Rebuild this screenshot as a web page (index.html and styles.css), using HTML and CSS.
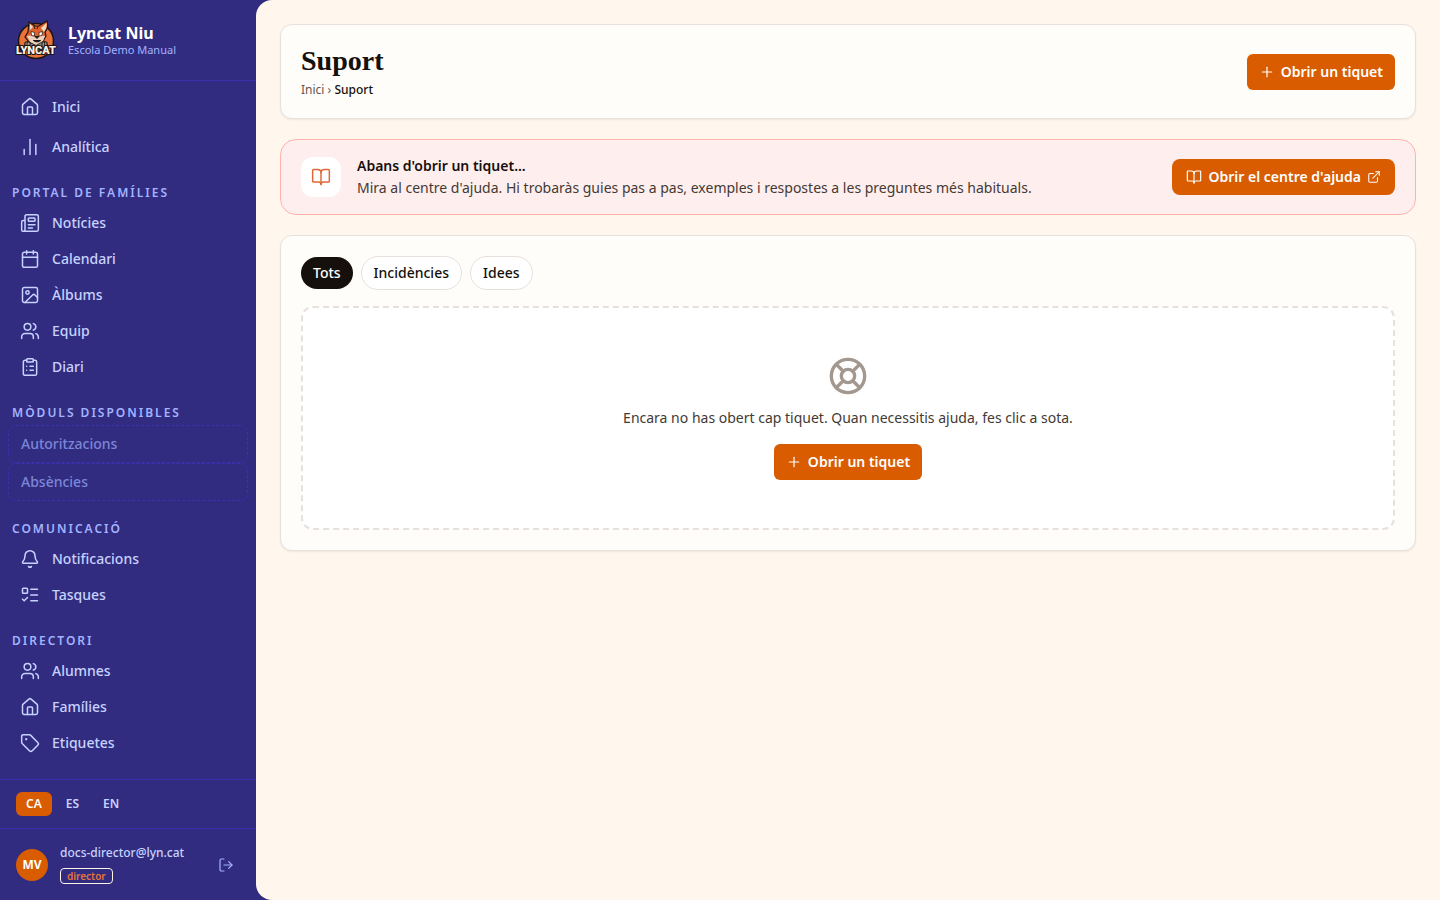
FILE: index.html
```html
<!DOCTYPE html>
<html lang="ca">
<head>
    <meta charset="UTF-8">
    <meta name="viewport" content="width=device-width, initial-scale=1.0">
    <title>Suport - Lyncat Niu</title>
    <link rel="stylesheet" href="styles.css">
</head>
<body>
    <!-- shared icons -->
    <svg class="sprite" aria-hidden="true">
        <symbol id="i-home" viewBox="0 0 24 24">
            <path d="M15 21v-8a1 1 0 0 0-1-1h-4a1 1 0 0 0-1 1v8"/>
            <path d="M3 10a2 2 0 0 1 .709-1.528l7-5.999a2 2 0 0 1 2.582 0l7 5.999A2 2 0 0 1 21 10v9a2 2 0 0 1-2 2H5a2 2 0 0 1-2-2z"/>
        </symbol>
        <symbol id="i-users" viewBox="0 0 24 24">
            <path d="M16 21v-2a4 4 0 0 0-4-4H6a4 4 0 0 0-4 4v2"/>
            <circle cx="9" cy="7" r="4"/>
            <path d="M22 21v-2a4 4 0 0 0-3-3.87"/>
            <path d="M16 3.13a4 4 0 0 1 0 7.75"/>
        </symbol>
        <symbol id="i-plus" viewBox="0 0 24 24">
            <path d="M5 12h14"/>
            <path d="M12 5v14"/>
        </symbol>
        <symbol id="i-book" viewBox="0 0 24 24">
            <path d="M12 7v14"/>
            <path d="M3 18a1 1 0 0 1-1-1V4a1 1 0 0 1 1-1h5a4 4 0 0 1 4 4 4 4 0 0 1 4-4h5a1 1 0 0 1 1 1v13a1 1 0 0 1-1 1h-6a3 3 0 0 0-3 3 3 3 0 0 0-3-3z"/>
        </symbol>
    </svg>

    <div class="app">
        <aside class="sidebar">
            <div class="brand">
                <svg class="logo" viewBox="0 0 40 40" role="img" aria-label="Lyncat">
                    <circle cx="20" cy="21" r="17.500" fill="#e8733a" stroke="#1d1512" stroke-width="1.500"/>
                    <path d="M8 30c-1-7 4-11 12-11s13 4 12 11z" fill="#8d8177" stroke="#1d1512"/>
                    <path d="M12 12 13 2l6 4h4l8-5c1.500 4 .500 8-2 11l1 4-3 5-7 4-7-3-4-5z" fill="#df622c" stroke="#1d1512" stroke-width="1.200"/>
                    <path d="m14 4 3 3-3 3zM30.500 3c.500 4-.500 6-2.500 9l-3-4z" fill="#f3d8bd"/>
                    <path d="M11 16l4-.500 5 2 5-2 4 .500-2 5-7 4-6-3z" fill="#e9d3bf"/>
                    <path d="M15 11.500l3.500 1v3.500l-3-.500zM26.500 11.500l-3.500 1v3.500l3-.500z" fill="#fff" stroke="#1d1512" stroke-width=".7"/>
                    <path d="M19 16.500h4l-2 2zM17 20c2 2.500 6 2.500 8 0M18 6l1 3M22 6l-1 3" fill="#1d1512" stroke="#1d1512" stroke-width=".9"/>
                    <path d="M9 22h5v5H9zM26 22h5v5h-5z" fill="#9c9188" stroke="#1d1512" stroke-width=".9"/>
                    <path d="M11 22v4M28.500 22v4" stroke="#1d1512" stroke-width=".8"/>
                    <text class="logo-text" x="20" y="34" text-anchor="middle">LYNCAT</text>
                </svg>
                <div class="brand-info">
                    <p class="brand-name">Lyncat Niu</p>
                    <p class="brand-school">Escola Demo Manual</p>
                </div>
            </div>

            <nav class="nav">
                <ul class="nav-list nav-main">
                    <li><a class="nav-link" href="#"><svg class="icon"><use href="#i-home"/></svg>Inici</a></li>
                    <li><a class="nav-link" href="#"><svg class="icon" viewBox="0 0 24 24"><path d="M5 21v-6"/><path d="M12 21V3"/><path d="M19 21V9"/></svg>Analítica</a></li>
                </ul>

                <h2 class="nav-title">Portal de famílies</h2>
                <ul class="nav-list">
                    <li><a class="nav-link" href="#"><svg class="icon" viewBox="0 0 24 24"><path d="M15 18h-5"/><path d="M18 14h-8"/><path d="M4 22h16a2 2 0 0 0 2-2V4a2 2 0 0 0-2-2H8a2 2 0 0 0-2 2v16a2 2 0 0 1-4 0v-9a2 2 0 0 1 2-2h2"/><rect width="8" height="4" x="10" y="6" rx="1"/></svg>Notícies</a></li>
                    <li><a class="nav-link" href="#"><svg class="icon" viewBox="0 0 24 24"><path d="M8 2v4"/><path d="M16 2v4"/><rect width="18" height="18" x="3" y="4" rx="2"/><path d="M3 10h18"/></svg>Calendari</a></li>
                    <li><a class="nav-link" href="#"><svg class="icon" viewBox="0 0 24 24"><rect width="18" height="18" x="3" y="3" rx="2"/><circle cx="9" cy="9" r="2"/><path d="m21 15-3.086-3.086a2 2 0 0 0-2.828 0L6 21"/></svg>Àlbums</a></li>
                    <li><a class="nav-link" href="#"><svg class="icon"><use href="#i-users"/></svg>Equip</a></li>
                    <li><a class="nav-link" href="#"><svg class="icon" viewBox="0 0 24 24"><rect width="8" height="4" x="8" y="2" rx="1"/><path d="M16 4h2a2 2 0 0 1 2 2v14a2 2 0 0 1-2 2H6a2 2 0 0 1-2-2V6a2 2 0 0 1 2-2h2"/><path d="M12 11h4"/><path d="M12 16h4"/><path d="M8 11h.01"/><path d="M8 16h.01"/></svg>Diari</a></li>
                </ul>

                <h2 class="nav-title">Mòduls disponibles</h2>
                <ul class="nav-list">
                    <li><a class="nav-link locked" href="#">Autoritzacions</a></li>
                    <li><a class="nav-link locked" href="#">Absències</a></li>
                </ul>

                <h2 class="nav-title">Comunicació</h2>
                <ul class="nav-list">
                    <li><a class="nav-link" href="#"><svg class="icon" viewBox="0 0 24 24"><path d="M10.268 21a2 2 0 0 0 3.464 0"/><path d="M3.262 15.326A1 1 0 0 0 4 17h16a1 1 0 0 0 .74-1.673C19.410 13.956 18 12.499 18 8A6 6 0 0 0 6 8c0 4.499-1.411 5.956-2.738 7.326"/></svg>Notificacions</a></li>
                    <li><a class="nav-link" href="#"><svg class="icon" viewBox="0 0 24 24"><rect x="3" y="4" width="6" height="6" rx="1"/><path d="m3 17 2 2 4-4"/><path d="M13 5h8"/><path d="M13 12h8"/><path d="M13 19h8"/></svg>Tasques</a></li>
                </ul>

                <h2 class="nav-title">Directori</h2>
                <ul class="nav-list">
                    <li><a class="nav-link" href="#"><svg class="icon"><use href="#i-users"/></svg>Alumnes</a></li>
                    <li><a class="nav-link" href="#"><svg class="icon"><use href="#i-home"/></svg>Famílies</a></li>
                    <li><a class="nav-link" href="#"><svg class="icon" viewBox="0 0 24 24"><path d="M12.586 2.586A2 2 0 0 0 11.172 2H4a2 2 0 0 0-2 2v7.172a2 2 0 0 0 .586 1.414l8.704 8.704a2.426 2.426 0 0 0 3.420 0l6.580-6.580a2.426 2.426 0 0 0 0-3.420z"/><circle cx="7.500" cy="7.500" r=".5" fill="currentColor"/></svg>Etiquetes</a></li>
                </ul>
            </nav>

            <div class="languages">
                <button class="lang active" type="button">CA</button>
                <button class="lang" type="button">ES</button>
                <button class="lang" type="button">EN</button>
            </div>

            <div class="user">
                <div class="avatar">MV</div>
                <div class="user-info">
                    <p class="user-email">docs-director@lyn.cat</p>
                    <span class="role">director</span>
                </div>
                <button class="logout" type="button" aria-label="Tancar sessió">
                    <svg class="icon icon-sm" viewBox="0 0 24 24"><path d="m16 17 5-5-5-5"/><path d="M21 12H9"/><path d="M9 21H5a2 2 0 0 1-2-2V5a2 2 0 0 1 2-2h4"/></svg>
                </button>
            </div>
        </aside>

        <main class="content">
            <header class="card page-header">
                <div>
                    <h1>Suport</h1>
                    <p class="breadcrumb"><a href="#">Inici</a> › <strong>Suport</strong></p>
                </div>
                <button class="btn" type="button"><svg class="icon icon-sm"><use href="#i-plus"/></svg>Obrir un tiquet</button>
            </header>

            <section class="notice">
                <div class="notice-icon"><svg class="icon"><use href="#i-book"/></svg></div>
                <div class="notice-text">
                    <h2>Abans d'obrir un tiquet...</h2>
                    <p>Mira al centre d'ajuda. Hi trobaràs guies pas a pas, exemples i respostes a les preguntes més habituals.</p>
                </div>
                <a class="btn btn-help" href="#">
                    <svg class="icon icon-sm"><use href="#i-book"/></svg>
                    Obrir el centre d'ajuda
                    <svg class="icon icon-xs" viewBox="0 0 24 24"><path d="M15 3h6v6"/><path d="M10 14 21 3"/><path d="M18 13v6a2 2 0 0 1-2 2H5a2 2 0 0 1-2-2V8a2 2 0 0 1 2-2h6"/></svg>
                </a>
            </section>

            <section class="card">
                <div class="filters">
                    <button class="pill active" type="button">Tots</button>
                    <button class="pill" type="button">Incidències</button>
                    <button class="pill" type="button">Idees</button>
                </div>
                <div class="empty">
                    <svg class="icon icon-lg" viewBox="0 0 24 24"><circle cx="12" cy="12" r="10"/><path d="m4.930 4.930 4.240 4.240"/><path d="m14.830 9.170 4.240-4.240"/><path d="m14.830 14.830 4.240 4.240"/><path d="m9.170 14.830-4.240 4.240"/><circle cx="12" cy="12" r="4"/></svg>
                    <p>Encara no has obert cap tiquet. Quan necessitis ajuda, fes clic a sota.</p>
                    <button class="btn" type="button"><svg class="icon icon-sm"><use href="#i-plus"/></svg>Obrir un tiquet</button>
                </div>
            </section>
        </main>
    </div>
</body>
</html>
```
FILE: styles.css
```css
*{
    margin: 0;
    padding: 0;
    box-sizing: border-box;
}

:root{
    --indigo: #312c80;
    --indigo-line: #3b30b0;
    --indigo-text: #c7d2ff;
    --indigo-muted: #a3b3ff;
    --orange: #d95d00;
    --cream: #fff7ed;
    --card: #fffdf9;
    --line: #e8e0dc;
    --ink: #16100c;
    --text: #433a34;
}

body{
    font-family: "Noto Sans", "Open Sans", sans-serif;
    font-size: 14px;
    line-height: 20px;
    color: var(--ink);
    background-color: var(--indigo);
}

a{
    color: inherit;
    text-decoration: none;
}

button{
    font: inherit;
    color: inherit;
    background: none;
    border: none;
    cursor: pointer;
}

ul{
    list-style: none;
}

.sprite{
    display: none;
}

.icon{
    width: 20px;
    height: 20px;
    flex-shrink: 0;
    fill: none;
    stroke: currentColor;
    stroke-width: 1.8;
    stroke-linecap: round;
    stroke-linejoin: round;
}

.icon-sm{
    width: 16px;
    height: 16px;
}

.icon-xs{
    width: 14px;
    height: 14px;
}

.icon-lg{
    width: 40px;
    height: 40px;
    stroke-width: 2;
    color: #a3988f;
}

.app{
    display: flex;
    height: 100vh;
}

/* sidebar */
.sidebar{
    width: 256px;
    flex-shrink: 0;
    display: flex;
    flex-direction: column;
    color: var(--indigo-text);
}

.brand{
    display: flex;
    align-items: center;
    gap: 12px;
    padding: 20px 16px;
    border-bottom: 1px solid var(--indigo-line);
}

.logo{
    width: 40px;
    height: 40px;
    overflow: visible;
}

.logo-text{
    font: 900 11px "Roboto", sans-serif;
    fill: #fff1e4;
    stroke: #1d1512;
    stroke-width: 2px;
    paint-order: stroke;
}

.brand-name{
    font-size: 16px;
    font-weight: 700;
    line-height: 20px;
    color: #fff;
}

.brand-school{
    font-size: 11px;
    line-height: 14px;
    color: var(--indigo-muted);
}

.nav{
    flex: 1;
    min-height: 0;
    padding: 8px;
    overflow: hidden;
}

.nav-main{
    display: grid;
    gap: 4px;
}

.nav-title{
    padding: 19px 4px 3px;
    font-size: 12px;
    font-weight: 600;
    line-height: 18px;
    letter-spacing: 2px;
    text-transform: uppercase;
    color: var(--indigo-muted);
}

.nav-link{
    display: flex;
    align-items: center;
    gap: 12px;
    padding: 8px 12px;
    border-radius: 8px;
    font-weight: 500;
}

.nav-link.locked{
    border: 1px dashed var(--indigo-line);
    color: #7c86d8;
}

.languages{
    display: flex;
    gap: 4px;
    padding: 12px 16px;
    border-top: 1px solid var(--indigo-line);
}

.lang{
    padding: 4px 10px;
    border-radius: 6px;
    font-size: 12px;
    font-weight: 600;
    line-height: 16px;
}

.lang.active{
    background-color: var(--orange);
    color: #fff;
}

.user{
    display: flex;
    align-items: center;
    gap: 12px;
    padding: 16px;
    border-top: 1px solid var(--indigo-line);
}

.avatar{
    width: 32px;
    height: 32px;
    display: flex;
    align-items: center;
    justify-content: center;
    border-radius: 50%;
    background-color: var(--orange);
    font-size: 12px;
    font-weight: 700;
    color: #fff;
}

.user-info{
    flex: 1;
    display: flex;
    flex-direction: column;
    align-items: flex-start;
    gap: 7px;
}

.user-email{
    font-size: 12px;
    line-height: 16px;
    font-weight: 500;
}

.role{
    padding: 0 6px;
    border: 1px solid #fff1e4;
    border-radius: 4px;
    font-size: 10px;
    font-weight: 600;
    line-height: 14px;
    color: #e8733a;
}

.logout{
    display: flex;
    padding: 6px;
    color: var(--indigo-muted);
}

/* content */
.content{
    flex: 1;
    min-width: 0;
    display: flex;
    flex-direction: column;
    gap: 20px;
    padding: 24px;
    overflow: auto;
    border-radius: 16px 0 0 16px;
    background-color: var(--cream);
}

.card{
    padding: 20px;
    border: 1px solid var(--line);
    border-radius: 12px;
    background-color: var(--card);
    box-shadow: 0 1px 2px rgba(60, 40, 20, 0.08);
}

.page-header{
    display: flex;
    align-items: center;
    justify-content: space-between;
}

.page-header h1{
    font-family: "Liberation Serif", serif;
    font-size: 28px;
    font-weight: 700;
    line-height: 32px;
}

.breadcrumb{
    margin-top: 4px;
    font-size: 12px;
    line-height: 17px;
    color: #5f554e;
}

.breadcrumb strong{
    font-weight: 500;
    color: var(--ink);
}

.btn{
    display: flex;
    align-items: center;
    gap: 6px;
    padding: 8px 12px;
    border-radius: 6px;
    background-color: var(--orange);
    font-weight: 600;
    color: #fff;
    white-space: nowrap;
}

.btn-help{
    padding: 8px 14px;
    border-radius: 8px;
}

.notice{
    display: flex;
    align-items: center;
    gap: 16px;
    padding: 16px 20px;
    border: 1px solid #ffb3ab;
    border-radius: 16px;
    background-color: #ffeeee;
}

.notice-icon{
    width: 40px;
    height: 40px;
    display: flex;
    align-items: center;
    justify-content: center;
    border-radius: 12px;
    background-color: #fff;
    color: #e0683a;
}

.notice-text{
    flex: 1;
    display: grid;
    gap: 2px;
}

.notice-text h2{
    font-size: 14px;
    font-weight: 600;
}

.notice-text p{
    color: var(--text);
}

.filters{
    display: flex;
    align-items: center;
    gap: 8px;
    margin-bottom: 16px;
}

.pill{
    padding: 6px 12px;
    border: 1px solid var(--line);
    border-radius: 17px;
    background-color: #fff;
    font-weight: 500;
}

.pill.active{
    border: none;
    background-color: var(--ink);
    color: #fff;
}

.empty{
    display: flex;
    flex-direction: column;
    align-items: center;
    padding: 48px;
    border: 2px dashed var(--line);
    border-radius: 12px;
    background-color: #fff;
}

.empty p{
    margin: 12px 0 16px;
    color: var(--text);
}
```
